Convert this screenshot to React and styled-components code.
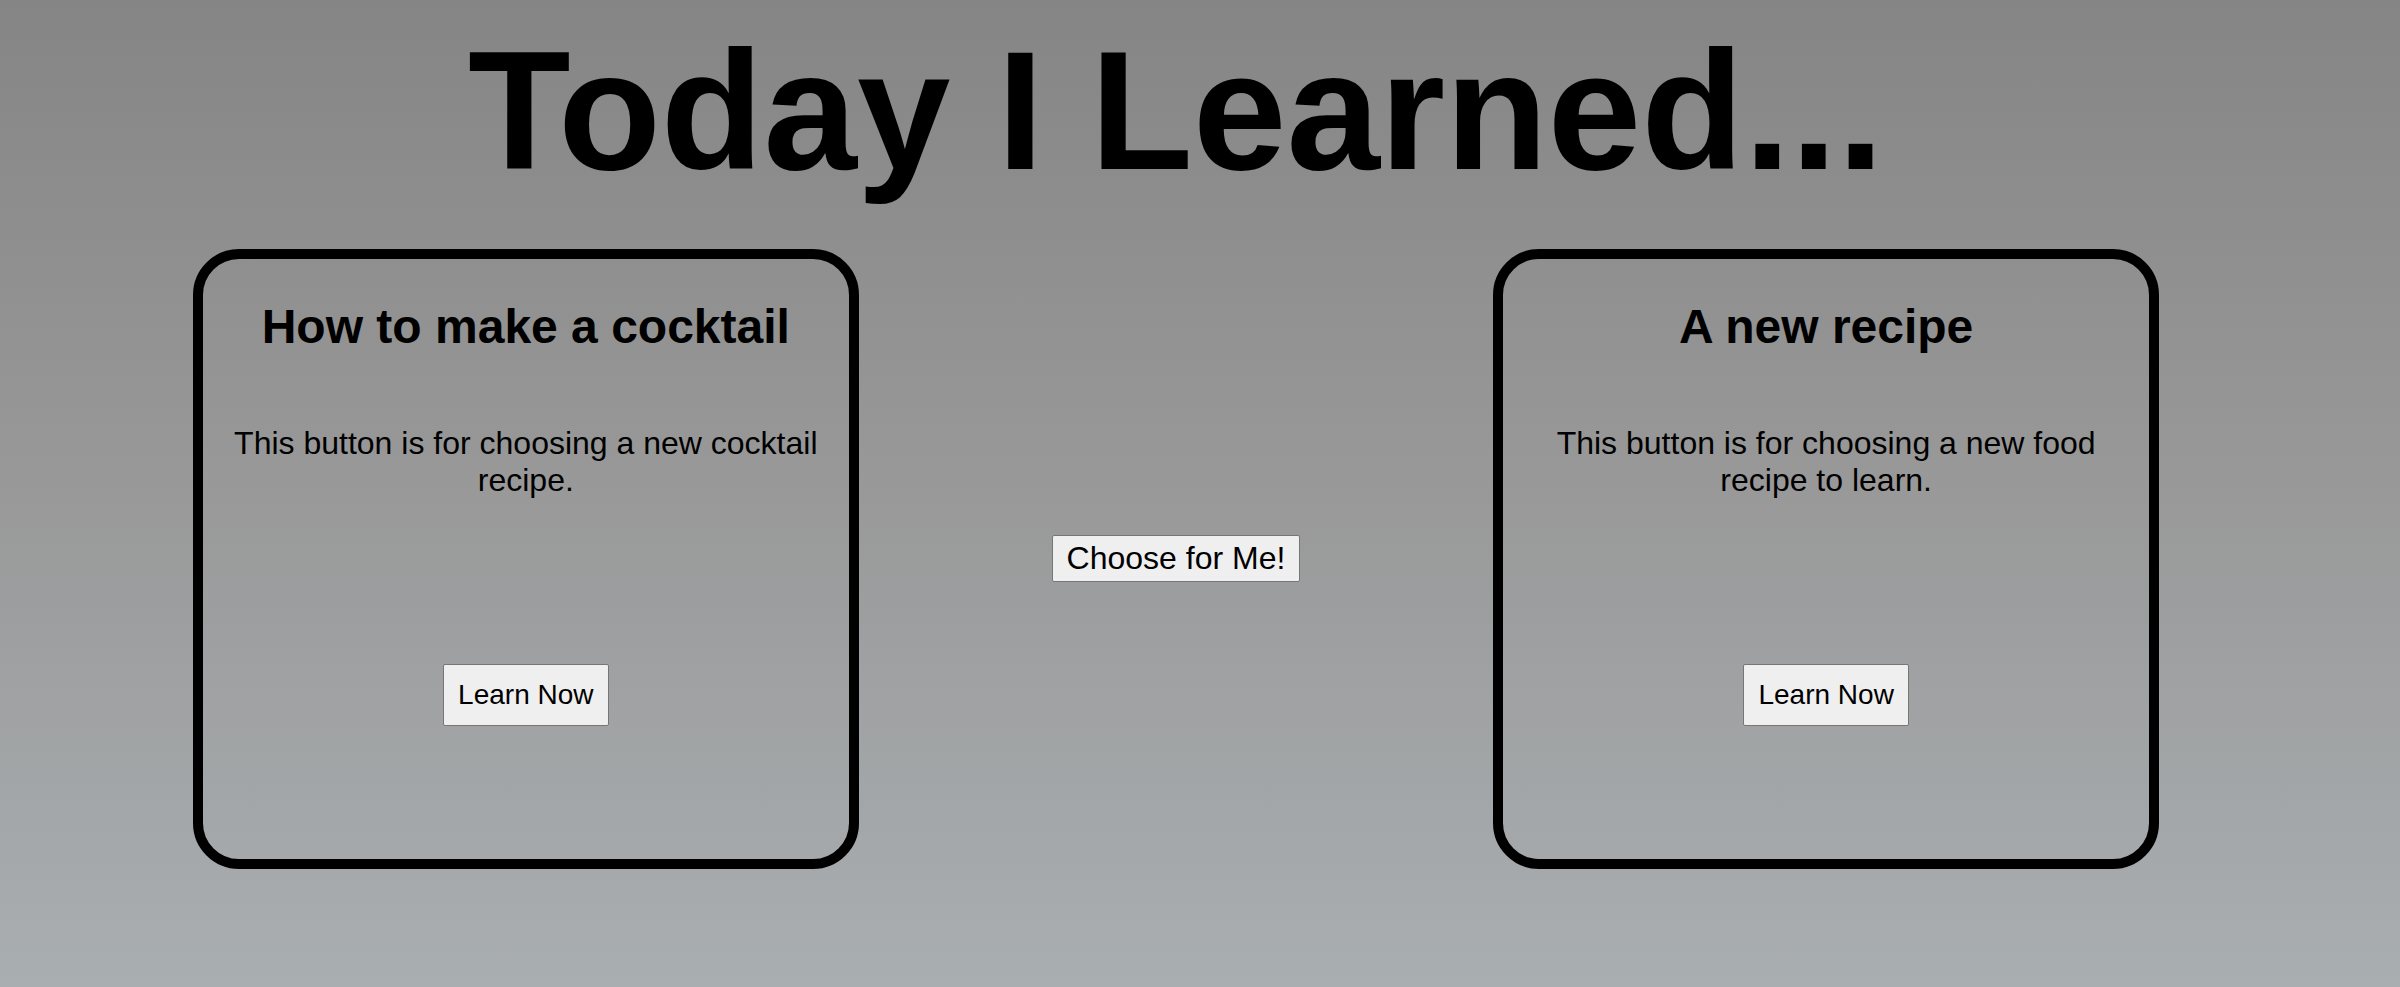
import React from "react";
import styled, { createGlobalStyle } from "styled-components";

const GlobalStyle = createGlobalStyle`
  html, body {
    margin: 0;
    padding: 0;
  }
  body {
    min-height: 100vh;
    font-family: "Liberation Sans", Arial, sans-serif;
    font-size: 32px;
    color: black;
    background: linear-gradient(to bottom, #858585 0%, #999999 50%, #a9aeb1 100%);
    background-attachment: fixed;
  }
`;

const Page = styled.div`
  width: 98%;
  min-height: 987px;
`;

const Title = styled.h1`
  margin: 15px 0 0;
  font-size: 168px;
  font-weight: bold;
  text-align: center;
  line-height: normal;
`;

const Row = styled.div`
  display: flex;
  justify-content: space-evenly;
  align-items: center;
  margin-top: 41px;
`;

const Card = styled.div`
  width: 646px;
  height: 600px;
  border: 10px solid black;
  border-radius: 46px;
  display: flex;
  flex-direction: column;
  align-items: center;
  text-align: center;
`;

const CardTitle = styled.h2`
  margin: 40px 0 0;
  font-size: 48px;
  font-weight: bold;
`;

const Description = styled.p`
  margin: 71px 0 0;
  padding: 0 20px;
  font-size: 32px;
`;

const Button = styled.button`
  font-family: "Liberation Sans", Arial, sans-serif;
  font-size: ${(p) => (p.$big ? "32px" : "28px")};
  padding: ${(p) => (p.$big ? "4px 14px" : "14px")};
  margin-top: ${(p) => p.$top || 0};
  margin-bottom: ${(p) => (p.$big ? "2px" : 0)};
  background: #efefef;
  color: black;
  border: 1px solid #767676;
  border-radius: 2px;
  cursor: pointer;
`;

function TopicCard({ title, text }) {
  return (
    <Card>
      <CardTitle>{title}</CardTitle>
      <Description>{text}</Description>
      <Button $top="165px">Learn Now</Button>
    </Card>
  );
}

export default function App() {
  return (
    <>
      <GlobalStyle />
      <Page>
        <Title>Today I Learned...</Title>
        <Row>
          <TopicCard
            title="How to make a cocktail"
            text="This button is for choosing a new cocktail recipe."
          />
          <Button $big>Choose for Me!</Button>
          <TopicCard
            title="A new recipe"
            text="This button is for choosing a new food recipe to learn."
          />
        </Row>
      </Page>
    </>
  );
}
